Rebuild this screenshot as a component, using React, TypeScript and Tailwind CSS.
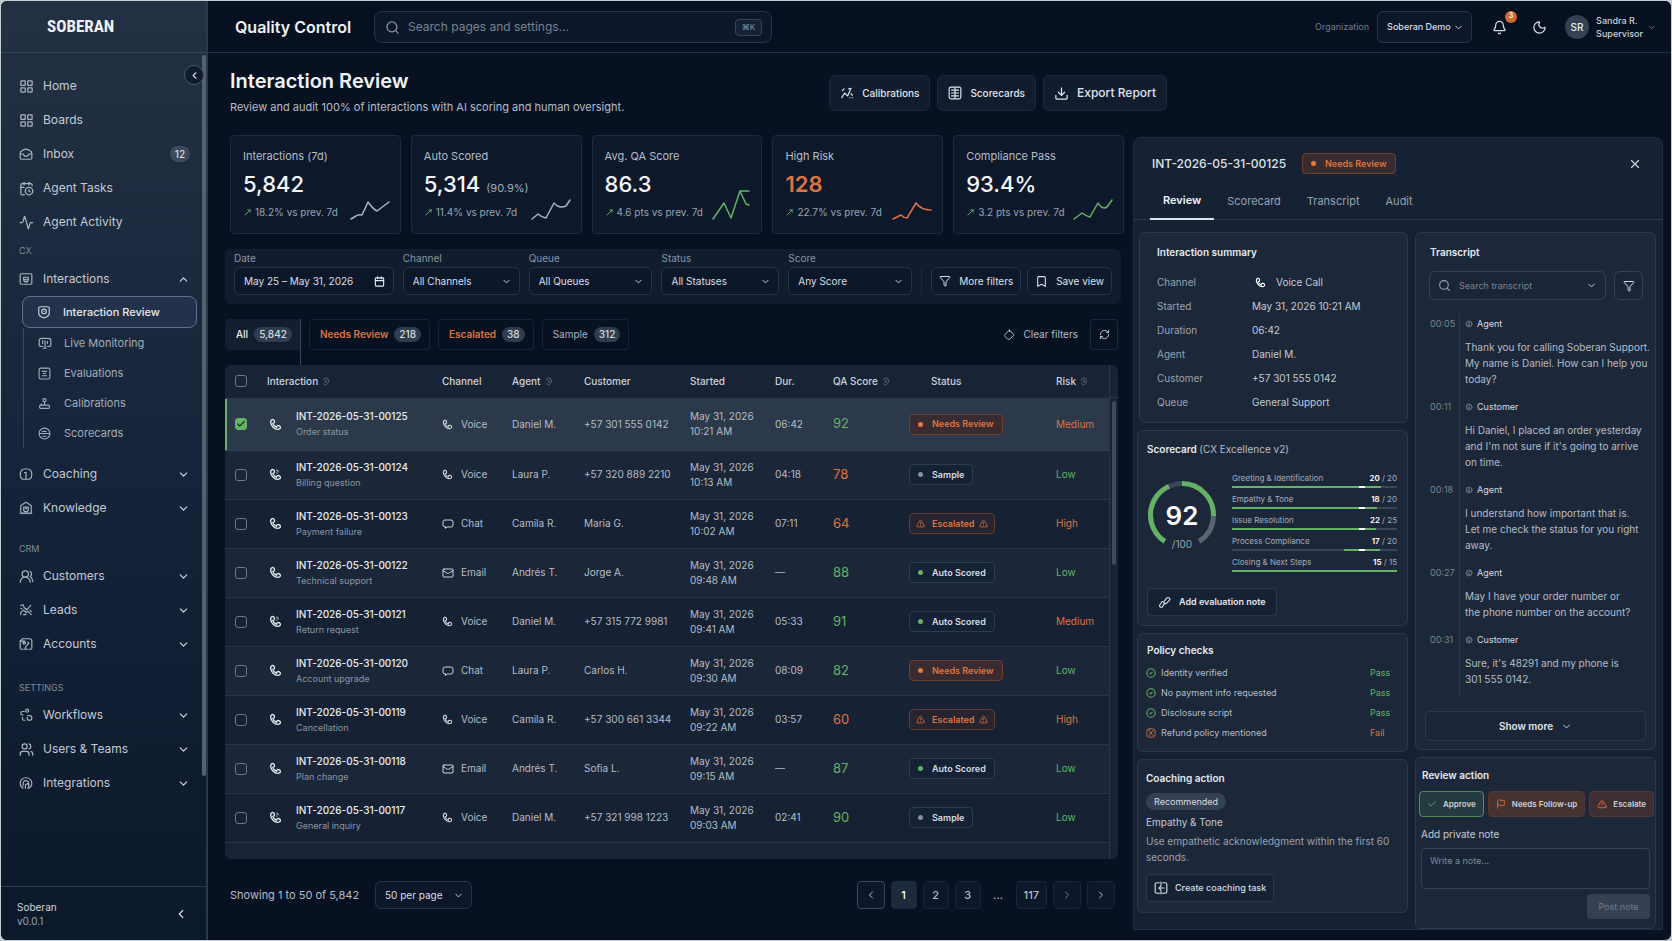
import { useState, type ReactNode } from "react";
import {
  Activity,
  Bell,
  Bookmark,
  Calendar,
  CalendarClock,
  Check,
  ChevronDown,
  ChevronLeft,
  ChevronRight,
  ChevronUp,
  CircleCheck,
  Download,
  Filter,
  Flag,
  Joystick,
  LayoutGrid,
  Mail,
  Moon,
  MoveUpRight,
  RefreshCw,
  Search,
  TriangleAlert,
  Users,
  UsersRound,
  X,
} from "lucide-react";

function Glyph({ children, size = 14, weight = 2 }: { children: ReactNode; size?: number; weight?: number }) {
  return (
    <svg
      width={size}
      height={size}
      viewBox="0 0 24 24"
      fill="none"
      stroke="currentColor"
      strokeWidth={weight}
      strokeLinecap="round"
      strokeLinejoin="round"
      className="shrink-0"
      aria-hidden="true"
    >
      {children}
    </svg>
  );
}

const PhoneIcon = ({ size = 13, ringing = false }: { size?: number; ringing?: boolean }) => (
  <Glyph size={size} weight={2.5}>
    <path d="M7 10c2 0 3.5-1.5 3-4S7.5 2 5.500 3 3 6 3 8c1 7 7 13 13 13 3 0 5.5-1.5 5-4s-3-3.5-5-3-2.5 2-2 3.5C11 16.5 8 14 7 10z" />
    {ringing && <path d="M14 4c1.500.5 2.500 1.500 3 3M14 9l.5.5" opacity="0.6" />}
  </Glyph>
);
const ChatIcon = () => (
  <Glyph size={12}>
    <path d="M7 18v3l3-3h8a4 4 0 0 0 4-4V8a4 4 0 0 0-4-4H6a4 4 0 0 0-4 4v6a4 4 0 0 0 4 4z" />
  </Glyph>
);
const InboxIcon = () => (
  <Glyph>
    <path d="M2 11c0-2 1-3.5 3-4.5l3.5-2a7 7 0 0 1 7 0l3.5 2c2 1 3 2.5 3 4.5v8a2 2 0 0 1-2 2H4a2 2 0 0 1-2-2z" />
    <path d="M2 12h5l2.5 3.5h5L17 12h5" />
  </Glyph>
);
const InteractionsIcon = () => (
  <Glyph>
    <path d="M7 21H4a2 2 0 0 1-2-2V5a2 2 0 0 1 2-2h16a2 2 0 0 1 2 2v14a2 2 0 0 1-2 2h-3" />
    <path d="M8 9h8v4a4 4 0 0 1-8 0zM10 12.5c1 1.5 3 1.5 4 0M9 21h6" />
  </Glyph>
);
const ReviewIcon = () => (
  <Glyph>
    <path d="M3 6c0-2 1.5-3 3.5-3h11C19.5 3 21 4 21 6v8c0 4-3 5.5-5 6.5-1.5.8-2 1.5-4 1.5s-2.5-.7-4-1.5C6 19.5 3 18 3 14z" />
    <circle cx="12" cy="11" r="4" />
    <path d="M12 11h.01" />
  </Glyph>
);
const MonitorIcon = () => (
  <Glyph>
    <path d="M8 18H6a4 4 0 0 1-4-4V8a4 4 0 0 1 4-4h12a4 4 0 0 1 4 4v6a4 4 0 0 1-4 4h-2" />
    <path d="M12 8v13M8 8v5M16 9v4M9 21h5" />
  </Glyph>
);
const EvaluationsIcon = () => (
  <Glyph size={13}>
    <rect x="2" y="2" width="20" height="20" rx="3" />
    <path d="M8 8h8M10 12h4M8 16h8" />
  </Glyph>
);
const ScorecardsIcon = () => (
  <Glyph size={13}>
    <circle cx="12" cy="12" r="10" />
    <path d="M3 12h18M8 8h7M9 17h6" />
  </Glyph>
);
const CoachingIcon = () => (
  <Glyph>
    <path d="M8 21H6c-2.5-1.5-4-4.5-4-8C2 7 6 3 12 3s10 4 10 10c0 3.5-1.5 6.5-4 8h-2" />
    <path d="M12 10v11M9.5 9.5h3M9 21h6" />
  </Glyph>
);
const KnowledgeIcon = () => (
  <Glyph>
    <path d="M3 8l6.5-4.5a4 4 0 0 1 5 0L21 8v11a2 2 0 0 1-2 2H5a2 2 0 0 1-2-2z" />
    <path d="M8 10.5h8v4a4 4 0 0 1-8 0zM11 13h2.5M2 21h20" />
  </Glyph>
);
const LeadsIcon = () => (
  <Glyph>
    <path d="M3 4l4-1 2 5 4 3M20 4l-4 5-4 3M3 20v-4l5-4 4 5 3-3 6 6M19 12l2 3M8 20h4M3 9l2 1" />
  </Glyph>
);
const AccountsIcon = () => (
  <Glyph>
    <path d="M7 21H4a2 2 0 0 1-2-2V7l4-4h12a4 4 0 0 1 4 4v12a2 2 0 0 1-2 2h-3" />
    <path d="M7 9h4v3H7zM15 9l2 2-3 3-3 4v3M2 7h8M9 21h6" />
  </Glyph>
);
const WorkflowsIcon = () => (
  <Glyph>
    <circle cx="14" cy="4.5" r="2.5" />
    <path d="M9 6H6a3 3 0 0 0 0 6h1M6 16v3a2 2 0 0 0 2 2h2M15 13h3a4 4 0 1 1-4 4v-1" />
  </Glyph>
);
const IntegrationsIcon = () => (
  <Glyph>
    <path d="M7 21c-3-1.5-5-4.5-5-8.5C2 7 6.500 3 12 3s10 4 10 9.5c0 4-2 7-5 8.5" />
    <path d="M7 17v-5a5 5 0 0 1 9-2l1 5M11 21v-6l4-2 2 4-2 4" />
  </Glyph>
);
const TrendIcon = () => (
  <Glyph>
    <path d="M3 20l5-8 5 5 5-11M15 5l4-1M4 8l3-3M19 13l2 3M17 20h.01M21 20h.01" />
  </Glyph>
);
const BoardIcon = () => (
  <Glyph>
    <rect x="2" y="2" width="20" height="20" rx="3" />
    <path d="M12 3v18M6 7h12M6 12h12M6 17h12" />
  </Glyph>
);
const ClearIcon = () => (
  <Glyph size={12}>
    <path d="M13 3l8 7a2 2 0 0 1 0 3l-7 7a4 4 0 0 1-5 0l-5-5a3 3 0 0 1 0-4l6-6zM13 1v4" />
  </Glyph>
);
const NoteIcon = () => (
  <Glyph size={13}>
    <path d="M12 9l4-5a3 3 0 0 1 5 4l-5 5c-2 2-5 1-5-1M12 14l-4 6a3 3 0 0 1-5-3l4-6c2-2 5 0 4 2" />
  </Glyph>
);
const TaskIcon = () => (
  <Glyph>
    <path d="M9 3H5a3 3 0 0 0-3 3v12a3 3 0 0 0 3 3h5M15 3h4a3 3 0 0 1 3 3v12a3 3 0 0 1-3 3h-5" />
    <path d="M12 2v4M8 12h9M12 8l-3 4 3 4M12 18v4" />
  </Glyph>
);
const SpeakerIcon = () => (
  <Glyph size={8}>
    <circle cx="12" cy="12" r="9" />
    <path d="M15 8h-4a3 3 0 0 0 0 6h3M9 17h5" />
  </Glyph>
);
const SortIcon = () => (
  <Glyph size={9}>
    <path d="M6 8c0-3 3-5 7-5 5 0 7 3 7 7 0 6-4 11-8 11-3 0-5-2-5-4M10 10h5M12 14h3" />
  </Glyph>
);

type NavItem = { label: string; icon: ReactNode; badge?: string; toggle?: "up" | "down" };

const MAIN_NAV: NavItem[] = [
  { label: "Home", icon: <LayoutGrid size={15} /> },
  { label: "Boards", icon: <LayoutGrid size={15} /> },
  { label: "Inbox", icon: <InboxIcon />, badge: "12" },
  { label: "Agent Tasks", icon: <CalendarClock size={15} /> },
  { label: "Agent Activity", icon: <Activity size={15} /> },
];

const SUB_NAV: NavItem[] = [
  { label: "Live Monitoring", icon: <MonitorIcon /> },
  { label: "Evaluations", icon: <EvaluationsIcon /> },
  { label: "Calibrations", icon: <Joystick size={13} /> },
  { label: "Scorecards", icon: <ScorecardsIcon /> },
];

const CX_NAV: NavItem[] = [
  { label: "Coaching", icon: <CoachingIcon />, toggle: "down" },
  { label: "Knowledge", icon: <KnowledgeIcon />, toggle: "down" },
];

const CRM_NAV: NavItem[] = [
  { label: "Customers", icon: <UsersRound size={15} />, toggle: "down" },
  { label: "Leads", icon: <LeadsIcon />, toggle: "down" },
  { label: "Accounts", icon: <AccountsIcon />, toggle: "down" },
];

const SETTINGS_NAV: NavItem[] = [
  { label: "Workflows", icon: <WorkflowsIcon />, toggle: "down" },
  { label: "Users & Teams", icon: <Users size={15} />, toggle: "down" },
  { label: "Integrations", icon: <IntegrationsIcon />, toggle: "down" },
];

function NavRow({ item }: { item: NavItem }) {
  return (
    <a href="#" className="flex h-[34px] items-center pr-4 pl-[18px] text-[12px] text-[#c3cad3]">
      <span className="flex w-6 text-[#a9b3bf]">{item.icon}</span>
      {item.label}
      {item.badge && (
        <span className="ml-auto flex h-4 w-5 items-center justify-center rounded-full bg-[#3d4a5b] text-[10px] font-medium text-[#d5dbe2]">
          {item.badge}
        </span>
      )}
      {item.toggle && (
        <span className="ml-auto text-[#d5dbe2]">
          {item.toggle === "up" ? <ChevronUp size={13} /> : <ChevronDown size={13} />}
        </span>
      )}
    </a>
  );
}

function Sidebar() {
  return (
    <aside className="relative flex w-[207px] shrink-0 flex-col border-r-2 border-[#2a394d] bg-linear-to-b from-[#243144] via-[#15243a] to-[#0c182b]">
      <div className="flex h-[52px] items-center border-b border-[#34445a] pl-[46px]">
        <span className="font-['Roboto_Condensed','Liberation_Sans_Narrow','Liberation_Sans',sans-serif] text-[17px] font-bold text-[#eef2f6]">
          SOBERAN
        </span>
      </div>
      <button
        aria-label="Collapse sidebar"
        className="absolute top-[64px] right-0.5 z-10 flex size-[20px] items-center justify-center rounded-full border border-[#44546a] bg-[#0f1c2f] text-[#d5dbe2]"
      >
        <ChevronLeft size={11} strokeWidth={2.5} />
      </button>
      <div className="absolute top-[54px] right-0 h-[721px] w-1 rounded-full bg-[#56616f]" />
      <nav className="flex-1 pt-4">
        {MAIN_NAV.map((item) => (
          <NavRow key={item.label} item={item} />
        ))}
        <p className="flex h-[23px] items-center pl-[18px] text-[9px] text-[#7f8b9a]">CX</p>
        <NavRow item={{ label: "Interactions", icon: <InteractionsIcon />, toggle: "up" }} />
        <a
          href="#"
          className="mr-[9px] ml-[21px] flex h-8 items-center rounded-lg border border-[#627083] bg-[#22324a] pl-[14px] text-[11px] font-medium text-[#e6ebf0]"
        >
          <span className="w-[26px] text-[#c3cad3]">
            <ReviewIcon />
          </span>
          Interaction Review
        </a>
        <div className="ml-[22px] border-l border-[#3a4a60]">
          {SUB_NAV.map((item) => (
            <a key={item.label} href="#" className="flex h-[30px] items-center pl-[14px] text-[11px] text-[#a3adba]">
              <span className="w-[26px]">{item.icon}</span>
              {item.label}
            </a>
          ))}
        </div>
        <div className="mt-[9px]">
          {CX_NAV.map((item) => (
            <NavRow key={item.label} item={item} />
          ))}
        </div>
        <p className="flex h-[34px] items-end pb-1 pl-[18px] text-[9px] text-[#7f8b9a]">CRM</p>
        {CRM_NAV.map((item) => (
          <NavRow key={item.label} item={item} />
        ))}
        <p className="flex h-[37px] items-end pb-1 pl-[18px] text-[9px] text-[#7f8b9a]">SETTINGS</p>
        {SETTINGS_NAV.map((item) => (
          <NavRow key={item.label} item={item} />
        ))}
      </nav>
      <div className="flex h-[54px] items-center justify-between border-t border-[#2c3b50] pr-[18px] pl-4">
        <div className="text-[10px] leading-[14px]">
          <p className="text-[#ccd3db]">Soberan</p>
          <p className="text-[#9aa5b3]">v0.0.1</p>
        </div>
        <ChevronLeft size={14} className="text-[#d5dbe2]" />
      </div>
    </aside>
  );
}

function SelectBox({ label, options, className = "" }: { label: string; options: string[]; className?: string }) {
  return (
    <span className={`relative flex items-center ${className}`}>
      <select
        aria-label={label}
        className="size-full appearance-none rounded-md border border-[#263548] bg-[#0c1829] pr-5 pl-[9px] text-[#d9dfe6] outline-none"
      >
        {options.map((o) => (
          <option key={o}>{o}</option>
        ))}
      </select>
      <ChevronDown size={11} className="pointer-events-none absolute right-2 text-[#d5dbe2]" />
    </span>
  );
}

function TopBar() {
  return (
    <header className="flex h-[52px] items-center border-b border-[#203044] bg-[#061020] pt-px pr-[15px] pl-[27px]">
      <p className="w-[139px] text-[16px] font-semibold text-[#eef2f6]">Quality Control</p>
      <label className="flex h-8 w-[398px] items-center rounded-lg border border-[#27364a] bg-[#0c1829] pr-[9px] pl-[10px]">
        <Search size={15} className="text-[#8d98a6]" />
        <input
          aria-label="Search pages and settings"
          placeholder="Search pages and settings..."
          className="ml-2 flex-1 bg-transparent text-[12px] text-white outline-none placeholder:text-[#77838f]"
        />
        <kbd className="flex h-[17px] w-[27px] items-center justify-center rounded border border-[#364558] bg-[#152235] font-[Inter,sans-serif] text-[8px] text-[#8d98a6]">
          ⌘K
        </kbd>
      </label>
      <div className="ml-auto flex items-center">
        <span className="mr-2 text-[9px] text-[#6f7b8b]">Organization</span>
        <SelectBox label="Organization" options={["Soberan Demo"]} className="h-8 w-[95px] text-[9px] font-medium" />
        <button aria-label="Notifications" className="relative ml-5 text-[#d5dbe2]">
          <Bell size={15} />
          <span className="absolute -top-[9px] -right-[10px] flex size-3 items-center justify-center rounded-full bg-[#cf6a35] text-[7px] font-semibold text-white">
            3
          </span>
        </button>
        <button aria-label="Dark mode" className="ml-[25px] text-[#d5dbe2]">
          <Moon size={15} />
        </button>
        <span className="ml-[18px] flex size-6 items-center justify-center rounded-full bg-[#344152] text-[10px] font-medium text-[#e6ebf0]">
          SR
        </span>
        <div className="ml-[7px] text-[9px] leading-[13px] font-medium text-[#ccd3db]">
          <p>Sandra R.</p>
          <p>Supervisor</p>
        </div>
        <ChevronDown size={9} className="ml-1 text-[#8d98a6]" />
      </div>
    </header>
  );
}

function PageTitle() {
  const button =
    "flex h-9 items-center gap-2 rounded-md border border-[#1b293c] bg-[#111d2f] px-[10px] font-medium text-[#e0e5eb]";
  return (
    <div className="flex items-start justify-between pt-4 pr-[504px] pb-[18px] pl-[22px]">
      <div>
        <h1 className="text-[20px] leading-6 font-semibold text-[#f1f4f7]">Interaction Review</h1>
        <p className="mt-1 text-[11px] leading-5 text-[#b4bdc8]">
          Review and audit 100% of interactions with AI scoring and human oversight.
        </p>
      </div>
      <div className="mt-1.5 flex gap-[7px]">
        <button className={`${button} text-[10px]`}>
          <TrendIcon />
          Calibrations
        </button>
        <button className={`${button} text-[10px]`}>
          <BoardIcon />
          Scorecards
        </button>
        <button className={`${button} text-[12px]`}>
          <Download size={15} />
          Export Report
        </button>
      </div>
    </div>
  );
}

const STATS = [
  { label: "Interactions (7d)", value: "5,842", delta: "18.2% vs prev. 7d", stroke: "#aab3bd", line: "M0 18L5 15Q8 13 11 14L17 1Q22 8 26 10L38 1" },
  { label: "Auto Scored", value: "5,314", extra: "(90.9%)", delta: "11.4% vs prev. 7d", stroke: "#aab3bd", line: "M0 18L6 13Q9 16 14 17L22 2Q27 8 34 5L38 -1" },
  { label: "Avg. QA Score", value: "86.3", delta: "4.6 pts vs prev. 7d", stroke: "#63b265", line: "M1 18L12 2L19 17L28 -10H37M28 -10L34 3L37 4" },
  { label: "High Risk", value: "128", delta: "22.7% vs prev. 7d", stroke: "#dd7440", line: "M0 18L8 14Q11 17 14 17L23 2Q28 9 38 9", alert: true },
  { label: "Compliance Pass", value: "93.4%", delta: "3.2 pts vs prev. 7d", stroke: "#63b265", line: "M0 18L8 12Q12 15 16 16L24 2Q28 9 33 6L38 -1" },
];

function Stats() {
  return (
    <div className="ml-[5px] grid grid-cols-5 gap-[10px]">
      {STATS.map((s) => (
        <div key={s.label} className="relative h-[99px] rounded border border-[#1d2b3e] bg-[#0d192b] pt-3 pl-3">
          <p className="text-[11px] leading-4 text-[#b4bdc8]">{s.label}</p>
          <p
            className={`mt-2 flex items-baseline text-[22px] leading-6 ${s.alert ? "font-semibold text-[#dd7440]" : "font-medium text-[#f4f6f8]"}`}
          >
            {s.value}
            {s.extra && <span className="ml-1.5 text-[11px] leading-none font-normal text-[#a3adba]">{s.extra}</span>}
          </p>
          <p className="mt-2 flex items-center text-[10px] leading-4 text-[#98a3b0]">
            <MoveUpRight size={9} className="mr-[3px] text-[#63b265]" strokeWidth={2.5} />
            {s.delta}
          </p>
          <svg width="40" height="32" viewBox="-1 -12 40 32" className="absolute right-[10px] bottom-3" fill="none" aria-hidden="true">
            <path d={s.line} stroke={s.stroke} strokeWidth="1.5" strokeLinecap="round" strokeLinejoin="round" />
          </svg>
        </div>
      ))}
    </div>
  );
}

const FILTERS = [
  { label: "Channel", value: "All Channels", width: "basis-[117px]" },
  { label: "Queue", value: "All Queues", width: "basis-[124px]" },
  { label: "Status", value: "All Statuses", width: "basis-[118px]" },
  { label: "Score", value: "Any Score", width: "basis-[124px]" },
];

function Filters() {
  const button =
    "flex h-7 items-center gap-2 rounded-md border border-[#263548] bg-[#0e1a2c] px-[7px] whitespace-nowrap text-[#dce2e8]";
  return (
    <div className="mt-[15px] mr-[3px] flex h-[55px] items-end gap-[9px] rounded-md bg-[#111d2f] px-[9px] pb-[9px] text-[10px] text-[#8a95a4]">
      <label className="shrink grow basis-[160px]">
        <span className="mb-[3px] block leading-3">Date</span>
        <span className="flex h-7 items-center rounded-md border border-[#263548] bg-[#0c1829] pr-2 pl-[9px]">
          <input readOnly value="May 25 – May 31, 2026" className="w-full bg-transparent text-[#d9dfe6] outline-none" />
          <Calendar size={11} className="shrink-0 text-[#e6ebf0]" strokeWidth={2.5} />
        </span>
      </label>
      {FILTERS.map((f) => (
        <div key={f.label} className={`shrink grow ${f.width}`}>
          <span className="mb-[3px] block leading-3">{f.label}</span>
          <SelectBox label={f.label} options={[f.value]} className="h-7" />
        </div>
      ))}
      <div className="flex gap-[6px] border-l border-[#1d2b3e] pl-[9px]">
        <button className={button}>
          <Filter size={12} />
          More filters
        </button>
        <button className={button}>
          <Bookmark size={13} />
          Save view
        </button>
      </div>
    </div>
  );
}

const TABS = [
  { label: "All", count: "5,842", tone: "text-[#e6ebf0] font-medium bg-[#131f31] border-[#131f31]" },
  { label: "Needs Review", count: "218", tone: "text-[#dd7440] font-semibold border-[#182538]" },
  { label: "Escalated", count: "38", tone: "text-[#dd7440] font-semibold border-[#182538]" },
  { label: "Sample", count: "312", tone: "text-[#a9b3bf] border-[#182538]" },
];

function QueueTabs() {
  return (
    <div className="mt-[15px] mr-[6px] flex h-[31px] gap-2 text-[10px]">
      {TABS.map((t, i) => (
        <button key={t.label} className={`relative flex items-center gap-[6px] rounded border pr-2 pl-[10px] ${t.tone}`}>
          {t.label}
          <span className="flex h-[15px] items-center rounded-full bg-[#303d4e] px-[5px] font-medium text-[#d5dbe2]">{t.count}</span>
          {i === 0 && <span className="absolute -top-px -right-px h-[46px] border-l border-[#3a485b]" />}
        </button>
      ))}
      <button className="ml-auto flex items-center gap-2 px-1 text-[#b4bdc8]">
        <ClearIcon />
        Clear filters
      </button>
      <button aria-label="Refresh" className="flex w-7 items-center justify-center rounded border border-[#1b293c] text-[#c3cad3]">
        <RefreshCw size={11} />
      </button>
    </div>
  );
}

type Status = "Needs Review" | "Sample" | "Escalated" | "Auto Scored";

const DOTS = {
  "Needs Review": "bg-[#e27a43]",
  Sample: "bg-[#8791a0]",
  "Auto Scored": "bg-[#63b265]",
};

function StatusBadge({ status }: { status: Status }) {
  if (status === "Escalated") {
    return (
      <span className="inline-flex h-[21px] items-center gap-[5px] rounded border border-[#5c3b30] bg-[#25242f] px-1.5 text-[9px] font-semibold text-[#dd7440]">
        <TriangleAlert size={9} />
        <span className="ml-0.5">{status}</span>
        <TriangleAlert size={9} />
      </span>
    );
  }
  return (
    <span
      className={`inline-flex h-[21px] items-center gap-[9px] rounded border px-2 text-[9px] font-semibold whitespace-nowrap ${
        status === "Needs Review" ? "border-[#6b412f] bg-[#392b30] text-[#dd7440]" : "border-[#2d3b4e] bg-[#152134] text-[#d5dbe2]"
      }`}
    >
      <span className={`size-[5px] rounded-full ${DOTS[status]}`} />
      {status}
    </span>
  );
}

type Row = {
  id: string;
  topic: string;
  channel: "Voice" | "Chat" | "Email";
  agent: string;
  customer: string;
  time: string;
  dur: string;
  score: number;
  status: Status;
  risk: string;
  ringing?: boolean;
};

const ROWS: Row[] = [
  { id: "INT-2026-05-31-00125", topic: "Order status", channel: "Voice", agent: "Daniel M.", customer: "+57 301 555 0142", time: "10:21 AM", dur: "06:42", score: 92, status: "Needs Review", risk: "Medium" },
  { id: "INT-2026-05-31-00124", topic: "Billing question", channel: "Voice", agent: "Laura P.", customer: "+57 320 889 2210", time: "10:13 AM", dur: "04:18", score: 78, status: "Sample", risk: "Low", ringing: true },
  { id: "INT-2026-05-31-00123", topic: "Payment failure", channel: "Chat", agent: "Camila R.", customer: "Maria G.", time: "10:02 AM", dur: "07:11", score: 64, status: "Escalated", risk: "High" },
  { id: "INT-2026-05-31-00122", topic: "Technical support", channel: "Email", agent: "Andrés T.", customer: "Jorge A.", time: "09:48 AM", dur: "—", score: 88, status: "Auto Scored", risk: "Low" },
  { id: "INT-2026-05-31-00121", topic: "Return request", channel: "Voice", agent: "Daniel M.", customer: "+57 315 772 9981", time: "09:41 AM", dur: "05:33", score: 91, status: "Auto Scored", risk: "Medium", ringing: true },
  { id: "INT-2026-05-31-00120", topic: "Account upgrade", channel: "Chat", agent: "Laura P.", customer: "Carlos H.", time: "09:30 AM", dur: "08:09", score: 82, status: "Needs Review", risk: "Low" },
  { id: "INT-2026-05-31-00119", topic: "Cancellation", channel: "Voice", agent: "Camila R.", customer: "+57 300 661 3344", time: "09:22 AM", dur: "03:57", score: 60, status: "Escalated", risk: "High" },
  { id: "INT-2026-05-31-00118", topic: "Plan change", channel: "Email", agent: "Andrés T.", customer: "Sofia L.", time: "09:15 AM", dur: "—", score: 87, status: "Auto Scored", risk: "Low" },
  { id: "INT-2026-05-31-00117", topic: "General inquiry", channel: "Voice", agent: "Daniel M.", customer: "+57 321 998 1223", time: "09:03 AM", dur: "02:41", score: 90, status: "Sample", risk: "Low", ringing: true },
];

const CHANNEL_ICONS = {
  Voice: <PhoneIcon size={11} />,
  Chat: <ChatIcon />,
  Email: <Mail size={12} />,
};

function RowCheckbox({ label, checked, onChange }: { label: string; checked: boolean; onChange: () => void }) {
  return (
    <span className="relative ml-[10px] flex size-3">
      <input
        type="checkbox"
        aria-label={label}
        checked={checked}
        onChange={onChange}
        className="size-3 appearance-none rounded-[3px] border border-[#6b7888] checked:border-[#63b265] checked:bg-[#63b265]"
      />
      {checked && <Check size={10} strokeWidth={3} className="pointer-events-none absolute top-px left-px text-[#14301d]" />}
    </span>
  );
}

function SortHead({ label }: { label: string }) {
  return (
    <th>
      <span className="flex items-center gap-[3px] whitespace-nowrap">
        {label}
        <span className="text-[#6f7b8b]">
          <SortIcon />
        </span>
      </span>
    </th>
  );
}

function InteractionTable() {
  const [selected, setSelected] = useState<string[]>([ROWS[0].id]);
  const toggle = (id: string) => setSelected((s) => (s.includes(id) ? s.filter((x) => x !== id) : [...s, id]));

  return (
    <div className="mt-[15px] mr-[6px] flex overflow-hidden rounded-md bg-[#182436]">
      <table className="w-full table-fixed border-collapse text-left text-[10px] text-[#b4bdc8]">
        <colgroup>
          <col className="w-[42px]" />
          <col />
          <col className="w-[70px]" />
          <col className="w-[72px]" />
          <col className="w-[106px]" />
          <col className="w-[85px]" />
          <col className="w-[58px]" />
          <col className="w-[76px]" />
          <col className="w-[147px]" />
          <col className="w-[53px]" />
        </colgroup>
        <thead>
          <tr className="h-[33px] border-b border-[#2a384b] text-[#ccd3db] [&>th]:font-medium">
            <th>
              <RowCheckbox
                label="Select all"
                checked={selected.length === ROWS.length}
                onChange={() => setSelected(selected.length === ROWS.length ? [] : ROWS.map((r) => r.id))}
              />
            </th>
            <SortHead label="Interaction" />
            <th>Channel</th>
            <SortHead label="Agent" />
            <th>Customer</th>
            <th>Started</th>
            <th>Dur.</th>
            <SortHead label="QA Score" />
            <th>
              <span className="ml-[22px]">Status</span>
            </th>
            <SortHead label="Risk" />
          </tr>
        </thead>
        <tbody>
          {ROWS.map((r, i) => {
            const on = selected.includes(r.id);
            const tone = on ? "border-[#33425a] bg-[#2b394a]" : i % 2 ? "border-[#28364a] bg-[#1b2739]" : "border-[#28364a] bg-[#162234]";
            return (
              <tr key={r.id} className={`border-b ${on ? "h-[52px]" : "h-[49px]"} ${tone}`}>
                <td className={on ? "shadow-[inset_2px_0_0_#63b265]" : ""}>
                  <RowCheckbox label={`Select ${r.id}`} checked={on} onChange={() => toggle(r.id)} />
                </td>
                <td>
                  <div className="flex items-center">
                    <span className="w-[29px] pl-[2px] text-[#e6ebf0]">
                      <PhoneIcon ringing={r.ringing} />
                    </span>
                    <div className="leading-[15px]">
                      <p className="font-medium text-[#e6ebf0]">{r.id}</p>
                      <p className="text-[9px] text-[#8a95a4]">{r.topic}</p>
                    </div>
                  </div>
                </td>
                <td>
                  <span className="flex items-center">
                    <span className="w-[19px] text-[#ccd3db]">{CHANNEL_ICONS[r.channel]}</span>
                    {r.channel}
                  </span>
                </td>
                <td>{r.agent}</td>
                <td>{r.customer}</td>
                <td className="leading-[15px]">
                  May 31, 2026
                  <br />
                  {r.time}
                </td>
                <td>{r.dur}</td>
                <td className={r.score < 80 ? "text-[13px] text-[#dd7440]" : "text-[13px] text-[#63b265]"}>{r.score}</td>
                <td>
                  <StatusBadge status={r.status} />
                </td>
                <td className={r.risk === "Low" ? "text-[#63b265]" : "text-[#dd7440]"}>{r.risk}</td>
              </tr>
            );
          })}
          <tr className="h-[17px]">
            <td colSpan={10} />
          </tr>
        </tbody>
      </table>
      <div className="w-[9px] shrink-0 border-l border-[#2a384b]">
        <div className="h-[33px] border-b border-[#2a384b]" />
        <div className="mx-auto mt-[3px] h-[164px] w-1 rounded-full bg-[#3f4b5b]" />
      </div>
    </div>
  );
}

function Pagination() {
  const base = "flex h-7 min-w-[26px] items-center justify-center rounded border px-[7px]";
  return (
    <div className="mt-[22px] mr-[9px] mb-4 flex items-center pl-[5px] text-[11px] text-[#b4bdc8]">
      <p className="w-[145px]">Showing 1 to 50 of 5,842</p>
      <SelectBox label="Rows per page" options={["50 per page"]} className="h-7 w-[97px] text-[10px]" />
      <nav aria-label="Pagination" className="ml-auto flex gap-1.5 font-medium">
        <button aria-label="First page" className={`${base} border-[#3a485b] bg-[#0c1829]`}>
          <ChevronLeft size={12} />
        </button>
        <button className={`${base} border-[#1d2b3e] bg-[#1d2a3c] text-white`}>1</button>
        <button className={`${base} border-[#17253a] bg-[#0c1829]`}>2</button>
        <button className={`${base} border-[#17253a] bg-[#0c1829]`}>3</button>
        <span className="flex w-[23px] items-center justify-center">...</span>
        <button className={`${base} border-[#17253a] bg-[#0c1829]`}>117</button>
        <button aria-label="Next page" className={`${base} border-[#17253a] bg-[#0c1829] text-[#77838f]`}>
          <ChevronRight size={12} />
        </button>
        <button aria-label="Last page" className={`${base} border-[#17253a] bg-[#0c1829]`}>
          <ChevronRight size={12} />
        </button>
      </nav>
    </div>
  );
}

const SUMMARY = [
  ["Started", "May 31, 2026 10:21 AM"],
  ["Duration", "06:42"],
  ["Agent", "Daniel M."],
  ["Customer", "+57 301 555 0142"],
  ["Queue", "General Support"],
];

function Summary() {
  return (
    <section className="ml-0.5 rounded-md border border-[#2b394c] bg-[#1c283a] pt-[11px] pb-2 pl-[17px] text-[10px]">
      <h3 className="leading-4 font-semibold text-[#e6ebf0]">Interaction summary</h3>
      <dl className="mt-[10px] leading-6 text-[#c3cad3]">
        <div className="flex">
          <dt className="w-[95px] text-[#98a3b0]">Channel</dt>
          <dd className="flex items-center gap-[10px] pl-[3px]">
            <span className="text-white">
              <PhoneIcon size={11} />
            </span>
            Voice Call
          </dd>
        </div>
        {SUMMARY.map(([k, v]) => (
          <div key={k} className="flex">
            <dt className="w-[95px] text-[#98a3b0]">{k}</dt>
            <dd>{v}</dd>
          </div>
        ))}
      </dl>
    </section>
  );
}

const CRITERIA = [
  { label: "Greeting & Identification", score: 20, max: 20, from: 0, to: 90, mark: true },
  { label: "Empathy & Tone", score: 18, max: 20, from: 0, to: 88, mark: true },
  { label: "Issue Resolution", score: 22, max: 25, from: 0, to: 87, mark: true },
  { label: "Process Compliance", score: 17, max: 20, from: 68, to: 90, mark: true },
  { label: "Closing & Next Steps", score: 15, max: 15, from: 0, to: 100, mark: false },
];

// clockwise arc between two angles, 0 = top
function arc(from: number, to: number) {
  const point = (deg: number) => {
    const a = ((deg - 90) * Math.PI) / 180;
    return `${(35 + 31.5 * Math.cos(a)).toFixed(2)} ${(35 + 31.5 * Math.sin(a)).toFixed(2)}`;
  };
  return `M${point(from)}A31.5 31.5 0 0 1 ${point(to)}`;
}

function Scorecard() {
  return (
    <section className="rounded-md border border-[#2b394c] bg-[#1c283a] pt-[10px] pr-[10px] pb-[9px] pl-[9px]">
      <h3 className="text-[10px] leading-4 font-semibold text-[#e6ebf0]">
        Scorecard <span className="font-normal text-[#b4bdc8]">(CX Excellence v2)</span>
      </h3>
      <div className="mt-[14px] flex">
        <div className="relative mt-[9px] size-[70px]">
          <svg width="70" height="70" viewBox="0 0 70 70" fill="none" strokeWidth="5" aria-hidden="true">
            <path d={arc(213, 336)} stroke="#63b265" />
            <path d={arc(336, 360)} stroke="#3b4757" />
            <path d={arc(0, 92)} stroke="#63b265" />
            <path d={arc(92, 147)} stroke="#5a6471" />
          </svg>
          <span className="absolute inset-0 flex items-center justify-center text-[26px] font-semibold text-white">92</span>
          <span className="absolute inset-x-0 top-[56px] text-center text-[10px] leading-4 text-[#98a3b0]">/100</span>
        </div>
        <ul className="ml-[15px] flex-1">
          {CRITERIA.map((c) => (
            <li key={c.label} className="h-[21px]">
              <p className="flex justify-between text-[8px] leading-[14px] text-[#a3adba]">
                {c.label}
                <span>
                  <b className="font-semibold text-white">{c.score}</b> / {c.max}
                </span>
              </p>
              <div className="relative mt-px h-0.5 bg-[#3b4757]">
                <span className="absolute h-0.5 bg-[#63b265]" style={{ left: `${c.from}%`, width: `${c.to - c.from}%` }} />
                {c.mark && <span className="absolute left-[77%] h-0.5 w-1.5 bg-white" />}
              </div>
            </li>
          ))}
        </ul>
      </div>
      <button className="mt-3 flex h-7 items-center gap-2 rounded border border-[#2b394c] bg-[#162234] px-[10px] text-[9px] font-semibold text-[#e0e5eb]">
        <NoteIcon />
        Add evaluation note
      </button>
    </section>
  );
}

const CHECKS = [
  { label: "Identity verified", pass: true },
  { label: "No payment info requested", pass: true },
  { label: "Disclosure script", pass: true },
  { label: "Refund policy mentioned", pass: false },
];

function PolicyChecks() {
  return (
    <section className="rounded-md border border-[#2b394c] bg-[#1c283a] px-2 py-2">
      <h3 className="pl-px text-[10px] leading-4 font-semibold text-[#e6ebf0]">Policy checks</h3>
      <ul className="mt-[5px] text-[9px] leading-5 text-[#b4bdc8]">
        {CHECKS.map((c) => (
          <li key={c.label} className="flex items-center">
            {c.pass ? (
              <CircleCheck size={10} className="text-[#63b265]" strokeWidth={2.5} />
            ) : (
              <span className="text-[#dd7440]">
                <Glyph size={10}>
                  <rect x="2" y="2" width="20" height="20" rx="6" />
                  <path d="M7 6l10 12M17 6L7 18" />
                </Glyph>
              </span>
            )}
            <span className="ml-[5px] flex-1">{c.label}</span>
            <span className={c.pass ? "w-[29px] text-[#63b265]" : "w-[29px] text-[#dd7440]"}>{c.pass ? "Pass" : "Fail"}</span>
          </li>
        ))}
      </ul>
    </section>
  );
}

function Coaching() {
  return (
    <section className="rounded-md border border-[#2b394c] bg-[#1c283a] px-2 py-[10px] text-[10px]">
      <h3 className="leading-4 font-semibold text-[#e6ebf0]">Coaching action</h3>
      <span className="mt-[7px] inline-flex h-[17px] items-center rounded-full bg-[#354152] px-2 text-[9px] text-[#d5dbe2]">Recommended</span>
      <p className="mt-0.5 leading-5 text-[#c3cad3]">Empathy & Tone</p>
      <p className="mt-px leading-4 text-[#98a3b0]">Use empathetic acknowledgment within the first 60 seconds.</p>
      <button className="mt-[9px] flex h-7 items-center gap-[7px] rounded border border-[#2b394c] bg-[#162234] px-[7px] text-[9px] font-medium text-[#d5dbe2]">
        <TaskIcon />
        Create coaching task
      </button>
    </section>
  );
}

const MESSAGES = [
  { time: "00:05", who: "Agent", lines: ["Thank you for calling Soberan Support.", "My name is Daniel. How can I help you", "today?"] },
  { time: "00:11", who: "Customer", lines: ["Hi Daniel, I placed an order yesterday", "and I'm not sure if it's going to arrive", "on time."] },
  { time: "00:18", who: "Agent", lines: ["I understand how important that is.", "Let me check the status for you right", "away."] },
  { time: "00:27", who: "Agent", lines: ["May I have your order number or", "the phone number on the account?"] },
  { time: "00:31", who: "Customer", lines: ["Sure, it's 48291 and my phone is", "301 555 0142."] },
];

function Transcript() {
  return (
    <section className="rounded-md border border-[#2b394c] bg-[#1c283a] pt-[11px] pb-2 text-[10px]">
      <h3 className="pl-[14px] leading-4 font-semibold text-[#e6ebf0]">Transcript</h3>
      <div className="mt-[11px] flex gap-2 pr-3 pl-[13px]">
        <label className="flex h-[29px] flex-1 items-center rounded-md border border-[#33425a] bg-[#1a2638] pr-2 pl-2">
          <Search size={13} className="shrink-0 text-[#98a3b0]" />
          <input
            aria-label="Search transcript"
            placeholder="Search transcript"
            className="ml-2 w-full min-w-0 bg-transparent text-[9px] text-white outline-none placeholder:text-[#77838f]"
          />
          <ChevronDown size={11} className="shrink-0 text-[#d5dbe2]" />
        </label>
        <button aria-label="Filter transcript" className="flex size-[29px] items-center justify-center rounded-md border border-[#33425a] bg-[#1a2638] text-[#d5dbe2]">
          <Filter size={12} />
        </button>
      </div>
      <ol className="mt-[14px] pl-[14px]">
        {MESSAGES.map((m) => (
          <li key={m.time} className="flex">
            <time className="w-[29px] shrink-0 text-[9px] leading-5 text-[#77838f]">{m.time}</time>
            <div className="flex-1 border-l border-[#2b394c] pb-[10px] pl-[5px]">
              <p className="flex items-center text-[9px] leading-5 text-[#d5dbe2]">
                <span className="mr-1 text-[#8a95a4]">
                  <SpeakerIcon />
                </span>
                {m.who}
              </p>
              <p className="mt-[5px] leading-4 whitespace-pre-line text-[#b4bdc8]">{m.lines.join("\n")}</p>
            </div>
          </li>
        ))}
      </ol>
      <div className="mt-[14px] px-[9px]">
        <button className="flex h-[30px] w-full items-center justify-center gap-2 rounded border border-[#2b394c] bg-[#1a2638] font-semibold text-[#e0e5eb]">
          Show more
          <ChevronDown size={11} />
        </button>
      </div>
    </section>
  );
}

function ReviewAction() {
  return (
    <section className="flex-1 rounded-md border border-[#2b394c] bg-[#1c283a] pt-[9px] pr-[5px] pb-[9px] pl-[5px]">
      <h3 className="pl-px text-[10px] leading-4 font-semibold text-[#e6ebf0]">Review action</h3>
      <div className="mt-2 -mr-1 -ml-0.5 flex gap-1 text-[8px] font-semibold text-[#ccd3db]">
        <button className="flex h-[26px] items-center gap-1.5 rounded border border-[#4f8f57] bg-[#233a3f] px-[7px]">
          <Check size={10} className="text-[#63b265]" />
          Approve
        </button>
        <button className="flex h-[26px] items-center gap-1.5 rounded border border-[#53382f] bg-[#46322f] px-[7px] whitespace-nowrap">
          <Flag size={10} className="text-[#e8763b]" />
          Needs Follow-up
        </button>
        <button className="flex h-[26px] items-center gap-1.5 rounded border border-[#53382f] bg-[#3c2e31] px-[7px]">
          <TriangleAlert size={10} className="text-[#e8763b]" />
          Escalate
        </button>
      </div>
      <label className="block text-[10px] leading-4 text-[#c3cad3]">
        <span className="mt-[9px] mb-[6px] block">Add private note</span>
        <textarea
          placeholder="Write a note..."
          className="block h-[41px] w-full resize-none rounded border border-[#33425a] bg-[#182436] px-2 py-1 text-[9px] leading-4 outline-none placeholder:text-[#7f8b9a]"
        />
      </label>
      <button disabled className="mt-[5px] ml-auto flex h-[25px] w-[63px] items-center justify-center rounded bg-[#354152] text-[9px] text-[#6f7b8b]">
        Post note
      </button>
    </section>
  );
}

const PANEL_TABS = ["Review", "Scorecard", "Transcript", "Audit"];

function DetailPanel() {
  return (
    <aside className="mt-[2px] mr-[8px] ml-[9px] w-[530px] shrink-0 rounded-t-lg border border-[#202e42] bg-[#162234]">
      <div className="flex items-center pt-[15px] pr-5 pl-[18px]">
        <h2 className="w-[150px] text-[12px] font-medium text-[#dce2e8]">INT-2026-05-31-00125</h2>
        <StatusBadge status="Needs Review" />
        <button aria-label="Close" className="ml-auto text-[#ccd3db]">
          <X size={14} />
        </button>
      </div>
      <div role="tablist" className="mt-[9px] flex h-[37px] border-b border-[#2b394c] pl-4">
        {PANEL_TABS.map((t, i) => (
          <button
            key={t}
            role="tab"
            aria-selected={i === 0}
            className={`px-[13px] text-[11px] ${
              i === 0 ? "-mb-px border-b-2 border-[#dce2e8] font-semibold text-[#f1f4f7]" : "text-[#98a3b0]"
            }`}
          >
            {t}
          </button>
        ))}
      </div>
      <div className="flex gap-[7px] pt-[12px] pr-[6px] pl-[3px]">
        <div className="flex w-[271px] shrink-0 flex-col gap-[7px] pb-[14px]">
          <Summary />
          <Scorecard />
          <PolicyChecks />
          <Coaching />
        </div>
        <div className="flex min-w-0 flex-1 flex-col gap-[7px]">
          <Transcript />
          <ReviewAction />
        </div>
      </div>
    </aside>
  );
}

export default function App() {
  return (
    <div className="min-h-screen bg-[#c4ccd3] p-px font-[Inter,'Liberation_Sans',sans-serif]">
      <div className="flex min-h-[calc(100vh-2px)] overflow-hidden rounded-md bg-[#071122]">
        <Sidebar />
        <div className="flex min-w-0 flex-1 flex-col">
          <TopBar />
          <PageTitle />
          <div className="flex items-start pl-[17px]">
            <main className="min-w-0 flex-1">
              <Stats />
              <Filters />
              <QueueTabs />
              <InteractionTable />
              <Pagination />
            </main>
            <DetailPanel />
          </div>
        </div>
      </div>
    </div>
  );
}
